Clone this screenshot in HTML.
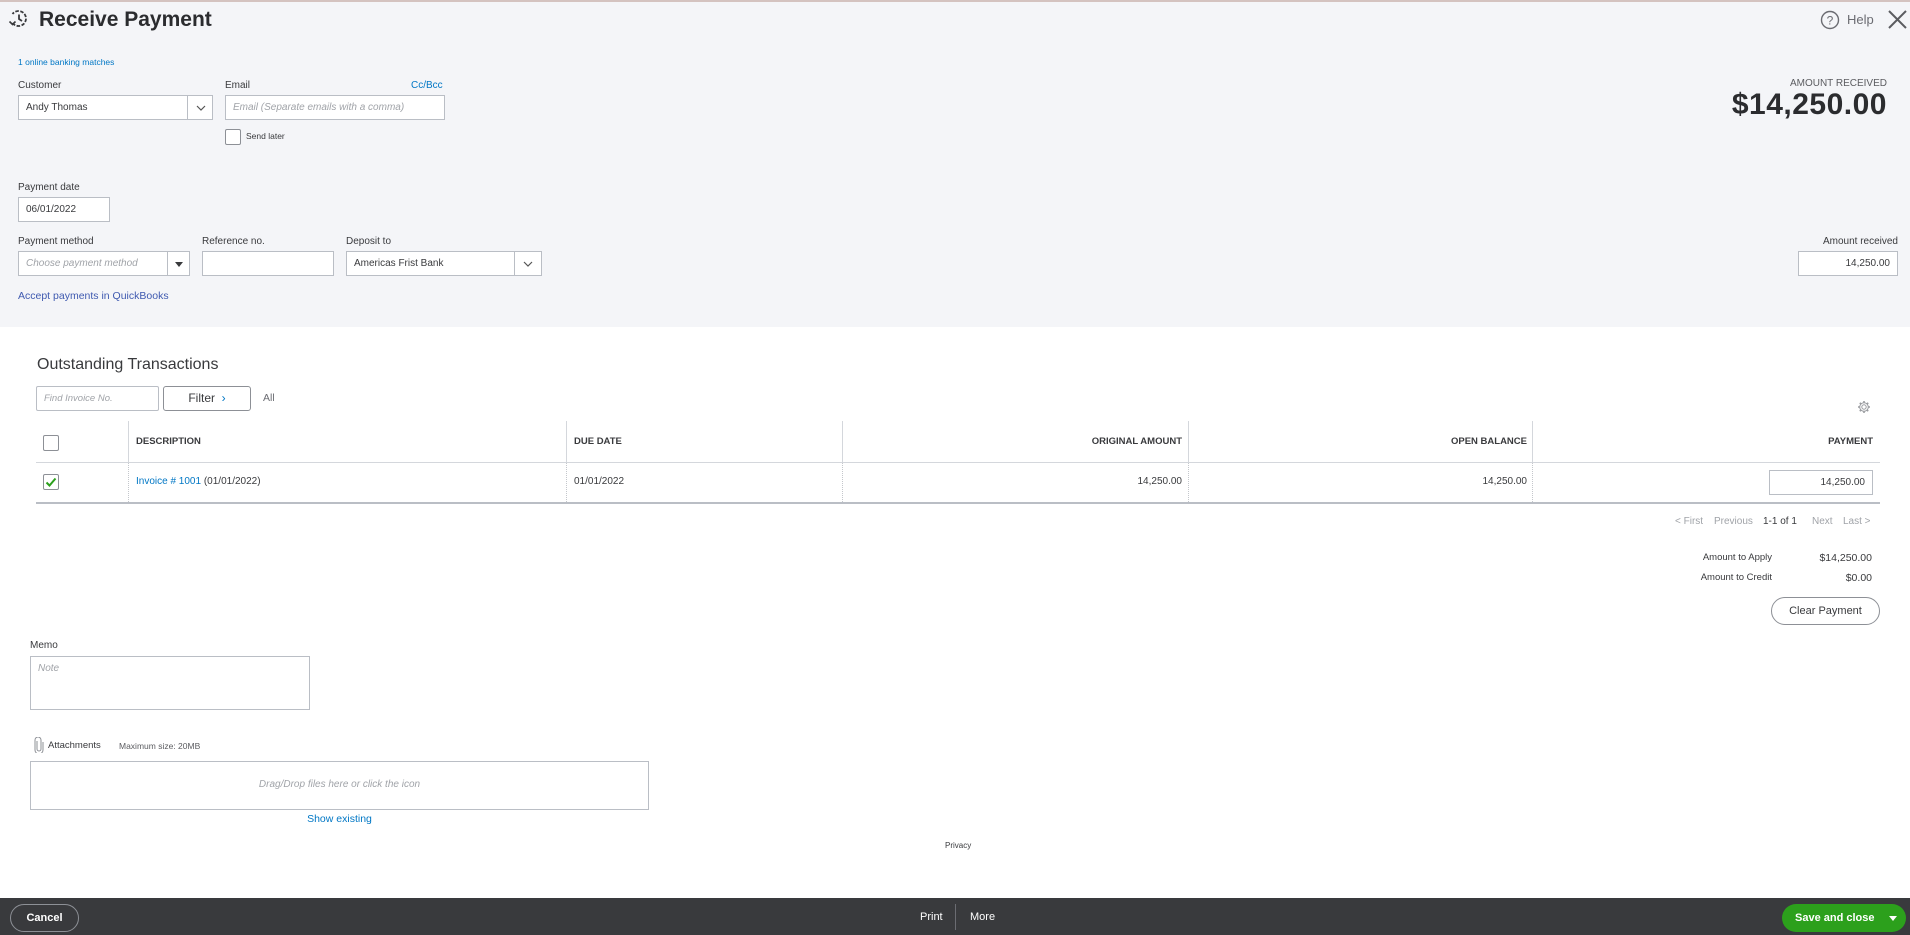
<!DOCTYPE html>
<html><head><meta charset="utf-8"><style>
*{box-sizing:border-box;margin:0;padding:0}
body{width:1910px;height:935px;position:relative;overflow:hidden;font-family:"Liberation Sans",sans-serif;background:#fff;color:#393a3d}
.a{position:absolute;white-space:nowrap}
.top{position:absolute;left:0;top:0;width:1910px;height:327px;background:#f4f5f8;border-top:2px solid #d4c3c0}
.lbl{font-size:10px;color:#393a3d}
.inp{position:absolute;background:#fff;border:1px solid #babec5;font-size:10px;color:#393a3d;padding-left:7px;line-height:23px}
.ph{color:#a0a3a8;font-style:italic}
.dv{position:absolute;top:0;bottom:0;border-left:1px solid #babec5}
.blue{color:#0077c5}
.th{font-size:9.5px;font-weight:bold;color:#393a3d}
.td{font-size:10px;color:#393a3d}
.vl{position:absolute;border-left:1px solid #d4d7dc}
.vd{position:absolute;border-left:1px dotted #c4c7cc}
.cb{position:absolute;width:16px;height:16px;border:1px solid #8d9096;background:#fff;border-radius:2px}
</style></head><body>
<div class="top"></div>
<svg class="a" style="left:8px;top:9px" width="21" height="20" viewBox="0 0 21 20"><path d="M4.5 14 A7.5 7.5 0 1 0 4.5 5" fill="none" stroke="#393a3d" stroke-width="1.8" stroke-dasharray="3.5 1.5"/><path d="M11 5.5v4.5l3 2" fill="none" stroke="#393a3d" stroke-width="1.8"/><path d="M1.5 12.5l3 3 3-3" fill="none" stroke="#393a3d" stroke-width="1.6"/></svg>
<div class="a" style="left:39px;top:8px;font-size:21px;font-weight:bold;color:#2b2c2f">Receive Payment</div>
<svg class="a" style="left:1820px;top:10px" width="20" height="20" viewBox="0 0 20 20"><circle cx="10" cy="10" r="8.5" fill="none" stroke="#6b6c72" stroke-width="1.4"/><text x="10" y="14.5" font-size="12" text-anchor="middle" fill="#6b6c72" font-family="Liberation Sans">?</text></svg>
<div class="a" style="left:1847px;top:12px;font-size:13px;color:#6b6c72">Help</div>
<svg class="a" style="left:1888px;top:10px" width="19" height="19" viewBox="0 0 19 19"><path d="M1 1L18 18M18 1L1 18" stroke="#5b5c60" stroke-width="2"/></svg>

<div class="a blue" style="left:18px;top:57px;font-size:8.5px">1 online banking matches</div>
<div class="a lbl" style="left:18px;top:80px">Customer</div>
<div class="inp" style="left:18px;top:95px;width:195px;height:25px">Andy Thomas<div class="dv" style="left:168px"></div><svg class="a" style="left:177px;top:9px" width="10" height="7" viewBox="0 0 10 7"><path d="M1 1l4 4 4-4" fill="none" stroke="#555" stroke-width="1.2"/></svg></div>
<div class="a lbl" style="left:225px;top:80px">Email</div>
<div class="a blue" style="left:411px;top:80px;font-size:10px">Cc/Bcc</div>
<div class="inp ph" style="left:225px;top:95px;width:220px;height:25px">Email (Separate emails with a comma)</div>
<div class="cb" style="left:225px;top:129px"></div>
<div class="a" style="left:246px;top:131px;font-size:8.5px">Send later</div>

<div class="a lbl" style="left:18px;top:182px">Payment date</div>
<div class="inp" style="left:18px;top:197px;width:92px;height:25px">06/01/2022</div>
<div class="a lbl" style="left:18px;top:236px">Payment method</div>
<div class="inp ph" style="left:18px;top:251px;width:172px;height:25px">Choose payment method<div class="dv" style="left:148px"></div><svg class="a" style="left:156px;top:10px" width="8" height="5" viewBox="0 0 8 5"><path d="M0 0h8L4 5z" fill="#393a3d"/></svg></div>
<div class="a lbl" style="left:202px;top:236px">Reference no.</div>
<div class="inp" style="left:202px;top:251px;width:132px;height:25px"></div>
<div class="a lbl" style="left:346px;top:236px">Deposit to</div>
<div class="inp" style="left:346px;top:251px;width:196px;height:25px">Americas Frist Bank<div class="dv" style="left:167px"></div><svg class="a" style="left:176px;top:9px" width="10" height="7" viewBox="0 0 10 7"><path d="M1 1l4 4 4-4" fill="none" stroke="#555" stroke-width="1.2"/></svg></div>
<div class="a" style="left:18px;top:290px;font-size:10.5px;color:#3f5ab0">Accept payments in QuickBooks</div>

<div class="a" style="right:23px;top:78px;font-size:10px;color:#5b5c60">AMOUNT RECEIVED</div>
<div class="a" style="right:23px;top:88px;font-size:30px;font-weight:bold;color:#2b2c2f;letter-spacing:0.5px">$14,250.00</div>
<div class="a lbl" style="right:12px;top:236px">Amount received</div>
<div class="inp" style="left:1798px;top:251px;width:100px;height:25px;text-align:right;padding-right:7px">14,250.00</div>

<div class="a" style="left:37px;top:356px;font-size:16px;color:#393a3d">Outstanding Transactions</div>
<div class="inp ph" style="left:36px;top:386px;width:123px;height:25px;font-size:9.5px;border-radius:2px">Find Invoice No.</div>
<div class="a" style="left:163px;top:386px;width:88px;height:25px;border:1px solid #8d9096;border-radius:3px;background:#fff;font-size:12px;text-align:center;line-height:23px">Filter &nbsp;<span style="color:#0077c5">&#x203A;</span></div>
<div class="a" style="left:263px;top:392px;font-size:10.5px;color:#6b6c72">All</div>
<svg class="a" style="left:1857px;top:400px" width="14" height="14" viewBox="0 0 14 14"><circle cx="7" cy="7" r="2.2" fill="none" stroke="#9a9ca0"/><path d="M7 1v2M7 11v2M1 7h2M11 7h2M2.8 2.8l1.4 1.4M9.8 9.8l1.4 1.4M2.8 11.2l1.4-1.4M9.8 4.2l1.4-1.4" stroke="#9a9ca0" stroke-width="1.6"/><circle cx="7" cy="7" r="4.3" fill="none" stroke="#9a9ca0"/></svg>

<div class="a" style="left:36px;top:462px;width:1844px;border-top:1px solid #d4d7dc"></div>
<div class="a" style="left:36px;top:502px;width:1844px;border-top:2px solid #babec5"></div>
<div class="vl" style="left:128px;top:421px;height:41px"></div>
<div class="vl" style="left:566px;top:421px;height:41px"></div>
<div class="vl" style="left:842px;top:421px;height:41px"></div>
<div class="vl" style="left:1188px;top:421px;height:41px"></div>
<div class="vl" style="left:1532px;top:421px;height:41px"></div>
<div class="vd" style="left:128px;top:463px;height:39px"></div>
<div class="vd" style="left:566px;top:463px;height:39px"></div>
<div class="vd" style="left:842px;top:463px;height:39px"></div>
<div class="vd" style="left:1188px;top:463px;height:39px"></div>
<div class="vd" style="left:1532px;top:463px;height:39px"></div>
<div class="cb" style="left:43px;top:435px"></div>
<div class="a th" style="left:136px;top:436px">DESCRIPTION</div>
<div class="a th" style="left:574px;top:436px">DUE DATE</div>
<div class="a th" style="right:728px;top:436px">ORIGINAL AMOUNT</div>
<div class="a th" style="right:383px;top:436px">OPEN BALANCE</div>
<div class="a th" style="right:37px;top:436px">PAYMENT</div>
<div class="cb" style="left:43px;top:474px"><svg width="14" height="14" viewBox="0 0 14 14" style="position:absolute;left:0;top:0"><path d="M2.5 7.5l3 3 6-7" fill="none" stroke="#2ca01c" stroke-width="2"/></svg></div>
<div class="a td" style="left:136px;top:476px"><span class="blue">Invoice # 1001</span> (01/01/2022)</div>
<div class="a td" style="left:574px;top:476px">01/01/2022</div>
<div class="a td" style="right:728px;top:476px">14,250.00</div>
<div class="a td" style="right:383px;top:476px">14,250.00</div>
<div class="inp" style="left:1769px;top:470px;width:104px;height:25px;text-align:right;padding-right:7px;font-size:10px">14,250.00</div>

<div class="a" style="left:1675px;top:516px;font-size:10px;color:#a0a3a8">&lt; First</div>
<div class="a" style="left:1714px;top:516px;font-size:10px;color:#a0a3a8">Previous</div>
<div class="a" style="left:1763px;top:516px;font-size:10px;color:#393a3d">1-1 of 1</div>
<div class="a" style="left:1812px;top:516px;font-size:10px;color:#a0a3a8">Next</div>
<div class="a" style="left:1843px;top:516px;font-size:10px;color:#a0a3a8">Last &gt;</div>
<div class="a" style="right:138px;top:552px;font-size:9.5px">Amount to Apply</div>
<div class="a" style="right:38px;top:552px;font-size:10.5px">$14,250.00</div>
<div class="a" style="right:138px;top:572px;font-size:9.5px">Amount to Credit</div>
<div class="a" style="right:38px;top:572px;font-size:10.5px">$0.00</div>
<div class="a" style="left:1771px;top:597px;width:109px;height:28px;border:1px solid #8d9096;border-radius:14px;font-size:11px;text-align:center;line-height:26px">Clear Payment</div>

<div class="a lbl" style="left:30px;top:640px">Memo</div>
<div class="inp ph" style="left:30px;top:656px;width:280px;height:54px;line-height:16px;padding-top:4px;font-size:10px">Note</div>
<svg class="a" style="left:34px;top:737px" width="10" height="16" viewBox="0 0 10 16"><path d="M3 4v8a2 2 0 0 0 4 0V3a3 3 0 0 0-6 0v10a4 4 0 0 0 8 0V5" fill="none" stroke="#8d9096" stroke-width="1"/></svg>
<div class="a" style="left:48px;top:740px;font-size:9.5px">Attachments</div>
<div class="a" style="left:119px;top:741px;font-size:8.5px;color:#5b5c60">Maximum size: 20MB</div>
<div class="inp" style="left:30px;top:761px;width:619px;height:49px"></div>
<div class="a ph" style="left:30px;top:779px;width:619px;text-align:center;font-size:10px">Drag/Drop files here or click the icon</div>
<div class="a blue" style="left:30px;top:813px;width:619px;text-align:center;font-size:10.5px">Show existing</div>
<div class="a" style="left:945px;top:841px;font-size:8px">Privacy</div>

<div class="a" style="left:0;top:898px;width:1910px;height:37px;background:#393a3d"></div>
<div class="a" style="left:10px;top:904px;width:69px;height:28px;border:1px solid #8d9096;border-radius:14px;color:#fff;font-size:11px;font-weight:bold;text-align:center;line-height:26px">Cancel</div>
<div class="a" style="left:920px;top:911px;font-size:11px;color:#fff">Print</div>
<div class="a" style="left:955px;top:904px;height:26px;border-left:1px solid #6b6c72"></div>
<div class="a" style="left:970px;top:911px;font-size:11px;color:#fff">More</div>
<div class="a" style="left:1782px;top:904px;width:124px;height:28px;background:#2ca01c;border-radius:14px;color:#fff;font-size:11px;font-weight:bold;line-height:28px;padding-left:13px">Save and close</div>
<svg class="a" style="left:1889px;top:916px" width="8" height="5" viewBox="0 0 8 5"><path d="M0 0h8L4 5z" fill="#fff"/></svg>
</body></html>
